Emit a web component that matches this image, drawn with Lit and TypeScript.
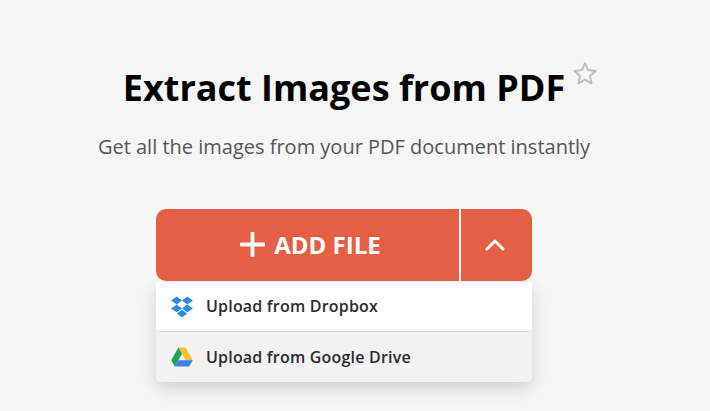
import { LitElement, html, css } from "lit";
import { customElement } from "lit/decorators.js";

@customElement("app-root")
export class AppRoot extends LitElement {
  static styles = css`
    :host {
      display: block;
      width: 710px;
      height: 411px;
      background: #f6f6f6;
      font-family: "Open Sans", sans-serif;
      overflow: hidden;
    }
    .page {
      display: flex;
      flex-direction: column;
      align-items: center;
      padding-top: 62px;
      padding-right: 22px;
    }
    .title-row {
      position: relative;
      height: 52px;
      display: flex;
      align-items: center;
    }
    h1 {
      margin: 0;
      font-size: 36px;
      line-height: 52px;
      font-weight: 700;
      color: #000;
    }
    .star {
      position: absolute;
      left: calc(100% + 7px);
      top: -1px;
      width: 26px;
      height: 25px;
    }
    .sub {
      margin: 19px 0 0;
      font-size: 20px;
      line-height: 27px;
      color: #555;
    }
    .widget {
      width: 376px;
      margin-top: 49px;
    }
    .btns {
      display: flex;
      height: 72px;
      gap: 2px;
    }
    .main, .more {
      background: #e55f44;
      color: #fff;
      display: flex;
      align-items: center;
      justify-content: center;
    }
    .main {
      flex: 1;
      border-radius: 10px 0 0 10px;
      gap: 9px;
      padding-left: 6px;
      padding-bottom: 1px;
      font-size: 24px;
      font-weight: 700;
    }
    .more {
      width: 71px;
      padding-right: 3px;
      box-sizing: border-box;
      border-radius: 0 10px 10px 0;
    }
    .menu {
      margin-top: 1px;
      box-shadow: 0 6px 16px rgba(0, 0, 0, 0.16);
      border-radius: 0 0 5px 5px;
    }
    .item {
      display: flex;
      align-items: center;
      gap: 13px;
      height: 49px;
      padding-left: 15px;
      font-size: 16px;
      letter-spacing: 0.2px;
      font-weight: 600;
      color: #2b2b2b;
      background: #fff;
    }
    .item span {
      padding-bottom: 1px;
    }
    .item.alt {
      height: 50px;
      background: #f2f2f2;
      border-top: 1px solid #d9d9d9;
      border-radius: 0 0 5px 5px;
    }
    svg { display: block; flex: none; }
  `;

  render() {
    return html`
      <div class="page">
        <div class="title-row">
          <h1>Extract Images from PDF</h1>
          <svg class="star" viewBox="0 0 25 25">
            <path d="M12.5 2.2l3.1 6.9 7.4.8-5.5 5 1.5 7.4-6.5-3.7-6.5 3.7 1.5-7.4-5.5-5 7.4-.8z" fill="none" stroke="#bdbdbd" stroke-width="2" stroke-linejoin="round" />
          </svg>
        </div>
        <p class="sub">Get all the images from your PDF document instantly</p>
        <div class="widget">
          <div class="btns">
            <div class="main">
              <svg width="25" height="25" viewBox="0 0 25 25">
                <path d="M12.5 1.5v22M1.5 12.5h22" stroke="#fff" stroke-width="3.8" fill="none" stroke-linecap="round" />
              </svg>
              <span>ADD FILE</span>
            </div>
            <div class="more">
              <svg width="20" height="12" viewBox="0 0 20 12">
                <path d="M2 10l8-8 8 8" stroke="#fff" stroke-width="3" fill="none" stroke-linecap="round" stroke-linejoin="round" />
              </svg>
            </div>
          </div>
          <div class="menu">
            <div class="item">
              <svg width="22" height="22" viewBox="0 0 22 22">
                <path fill="#2a8ee0" d="M5.8 0.5L0 4.6l5.8 3.9L11 4.6zM16.2 0.5L11 4.6l5.2 3.9L22 4.6zM0 12.4l5.8 3.9L11 12.4 5.8 8.5zM16.2 8.5L11 12.4l5.2 3.9L22 12.4zM5.8 17.6L11 21.5l5.2-3.9L11 13.7z" />
              </svg>
              <span>Upload from Dropbox</span>
            </div>
            <div class="item alt">
              <svg width="22" height="20" viewBox="0 0 22 20">
                <path fill="#fbc02d" d="M7.4 0.5h7.2L21.8 13.2h-7.2z" />
                <path fill="#1e9e5a" d="M7.4 0.5l3.6 6.3L3.8 19.5 0.2 13.2z" />
                <path fill="#3f7fe8" d="M7.4 13.2h14.4l-3.6 6.3H3.8z" />
              </svg>
              <span>Upload from Google Drive</span>
            </div>
          </div>
        </div>
      </div>
    `;
  }
}
